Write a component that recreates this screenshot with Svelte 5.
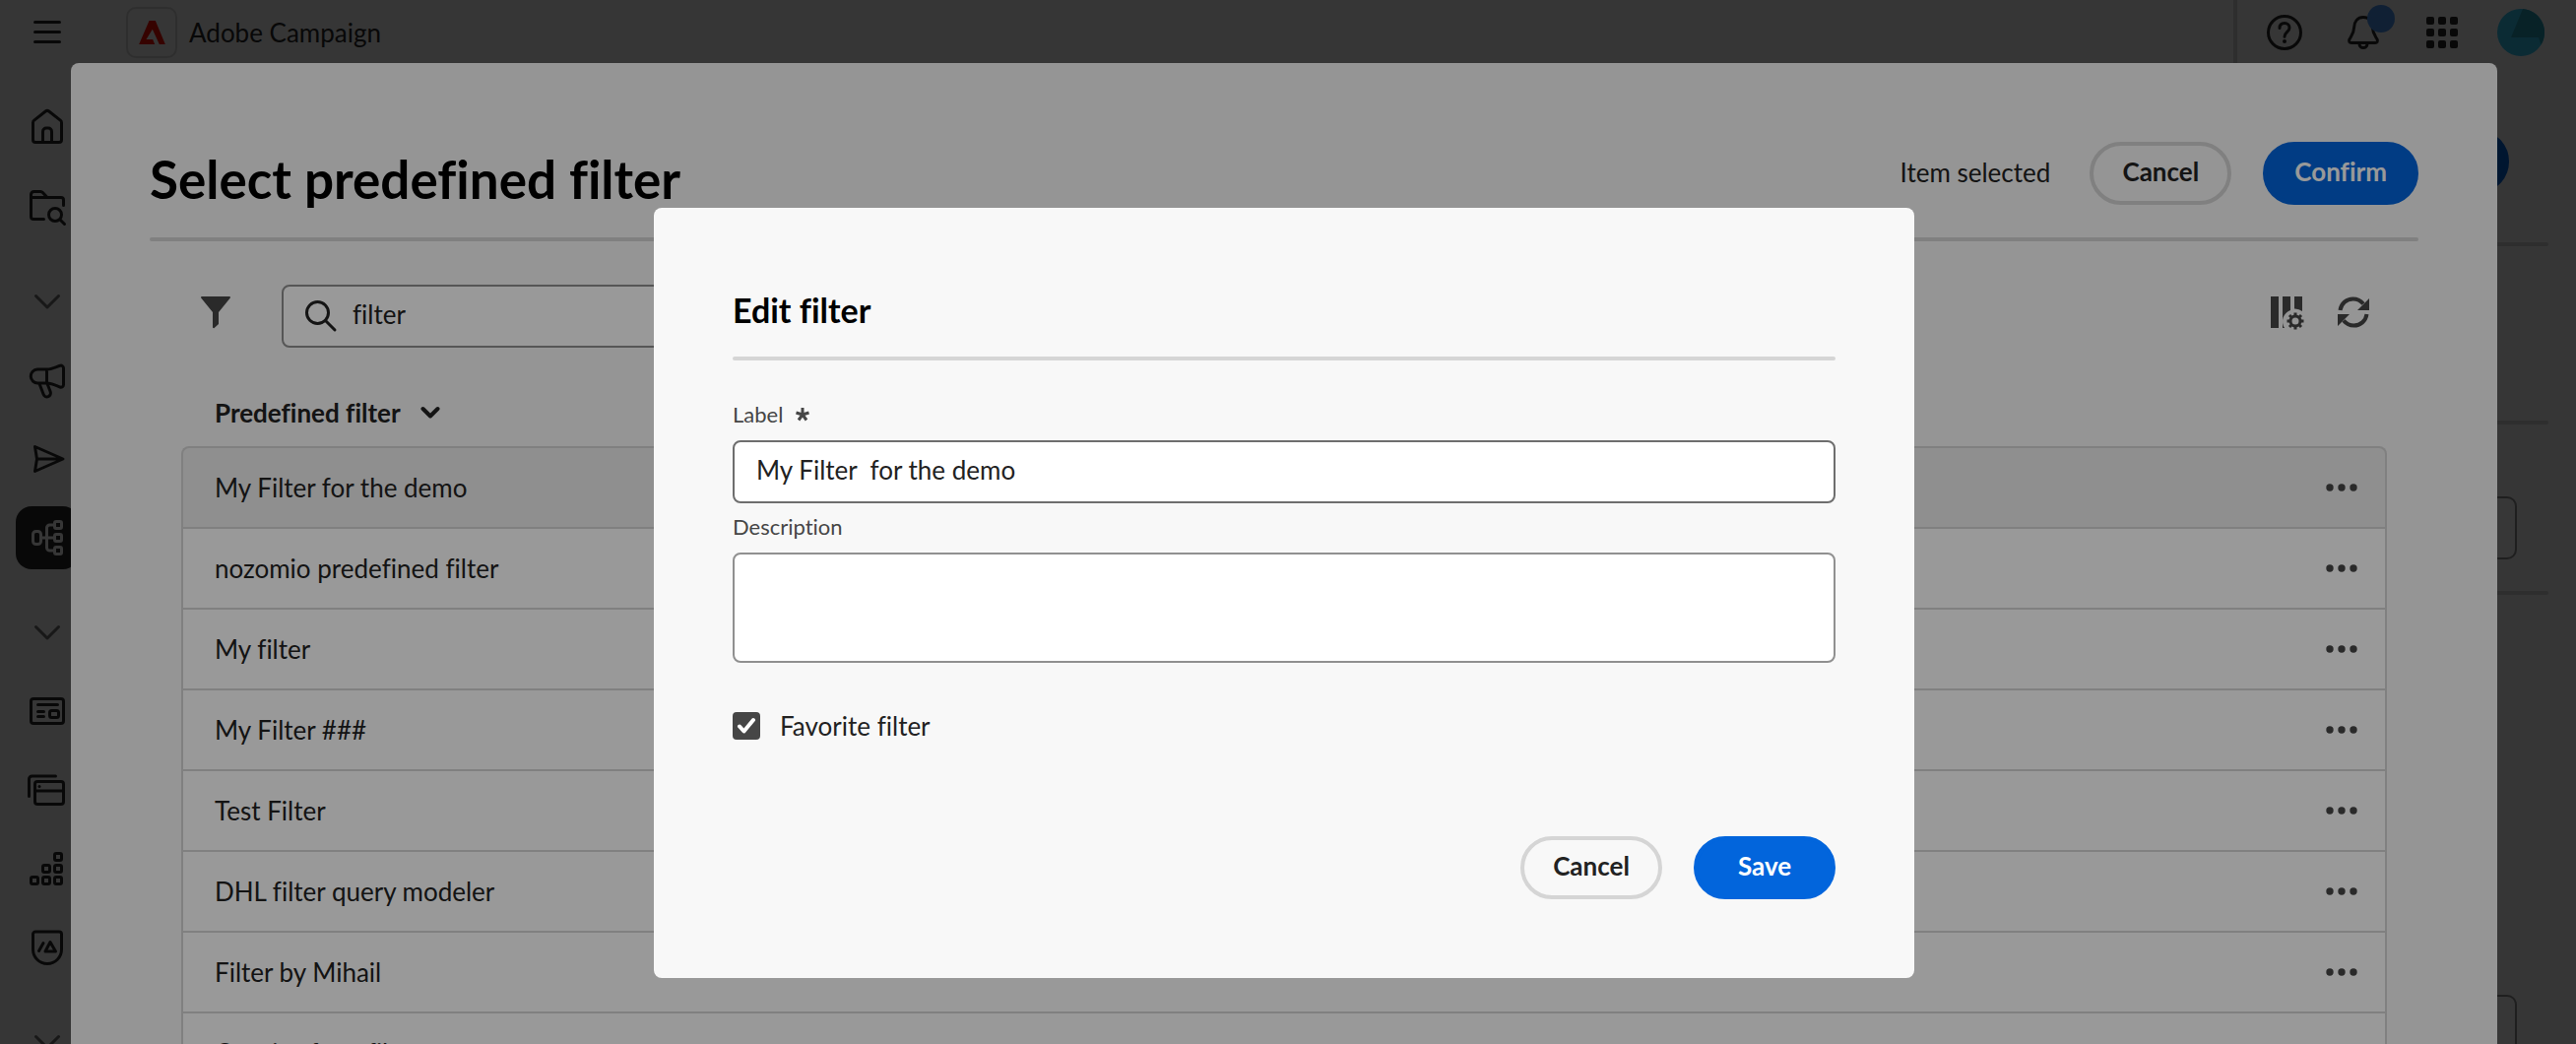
<script>
  let search = $state('filter');
  let label = $state('My Filter  for the demo');
  let description = $state('');
  let favorite = $state(true);

  const rows = [
    'My Filter for the demo',
    'nozomio predefined filter',
    'My filter',
    'My Filter ###',
    'Test Filter',
    'DHL filter query modeler',
    'Filter by Mihail',
    'Queries for a filter'
  ];

  const rail = [
    { name: 'Home', icon: 'home' },
    { name: 'Explorer', icon: 'folder' },
    { name: 'Collapse section', icon: 'chevron' },
    { name: 'Campaigns', icon: 'megaphone' },
    { name: 'Deliveries', icon: 'send' },
    { name: 'Workflows', icon: 'workflow', active: true },
    { name: 'Collapse section', icon: 'chevron' },
    { name: 'Landing pages', icon: 'page' },
    { name: 'Templates', icon: 'windows' },
    { name: 'Audiences', icon: 'blocks' },
    { name: 'Brands', icon: 'shield' },
    { name: 'Collapse section', icon: 'chevron' }
  ];
</script>

{#snippet railIcon(icon)}
  <svg class="icon" viewBox="0 0 40 40" aria-hidden="true">
    {#if icon === 'home'}
      <path d="M5.500 14.500a3 3 0 0 1 1.200-2.400L18.300 3a2.800 2.800 0 0 1 3.400 0l11.600 9.100a3 3 0 0 1 1.200 2.400V32a2.500 2.500 0 0 1-2.500 2.500H8A2.500 2.500 0 0 1 5.500 32z" />
      <path d="M15.500 34V23.500a3.500 3.500 0 0 1 3.500-3.500h2a3.500 3.500 0 0 1 3.500 3.500V34" />
    {:else if icon === 'folder'}
      <path d="M16.500 32.500H6A2.500 2.500 0 0 1 3.500 30V7.500A3 3 0 0 1 6.500 4.500h6.700a3 3 0 0 1 2.200 1l4.600 5h14A2.500 2.500 0 0 1 36.500 13v5.500M4 10.500h16" />
      <circle cx="28" cy="28" r="6.500" />
      <path d="M33 33l4.500 4.500" />
    {:else if icon === 'chevron'}
      <path class="faint" d="M8.500 14.500L20 26l11.500-11.500" />
    {:else if icon === 'megaphone'}
      <path d="M10 9h9.500c5 0 9.500-2.500 13.500-3.700a2.600 2.600 0 0 1 3.500 2.500v16.700a2.600 2.600 0 0 1-3.500 2.500C29 25.500 24.500 23 19.500 23H10.500A7 7 0 0 1 10 9zM19.500 9v14" />
      <path d="M12 23.500l4.200 11a3.700 3.700 0 0 0 7-2.700l-3.300-8.500" />
    {:else if icon === 'send'}
      <path d="M7.500 7.500L36 20 7.500 32.500 9.500 20zM9.500 20H34" />
    {:else if icon === 'workflow'}
      <rect x="5.500" y="13.500" width="8" height="13" rx="3" />
      <rect x="27.500" y="3.500" width="7" height="7" rx="1.500" />
      <rect x="27.500" y="16.500" width="7" height="7" rx="1.500" />
      <rect x="27.500" y="29.500" width="7" height="7" rx="1.500" />
      <path d="M13.500 20h14M27.500 7H22.500a3 3 0 0 0-3 3v20a3 3 0 0 0 3 3h5" />
    {:else if icon === 'page'}
      <rect x="3.500" y="7.500" width="33" height="25" rx="2.500" />
      <path d="M10.500 13.500h20M10.500 20.500h6M10.500 25.500h6" />
      <rect x="22.500" y="19.500" width="9" height="7" rx="2" />
    {:else if icon === 'windows'}
      <rect x="7.500" y="11.500" width="29" height="23" rx="2.500" />
      <path d="M8 21h28M1.500 26.500V9A3 3 0 0 1 4.500 6h24" />
      <circle class="solid" cx="12" cy="16.500" r="1.500" />
    {:else if icon === 'blocks'}
      <rect x="27.500" y="4.500" width="7" height="7" rx="1.500" />
      <rect x="15.500" y="16.500" width="7" height="7" rx="1.500" />
      <rect x="27.500" y="16.500" width="7" height="7" rx="1.500" />
      <rect x="3.500" y="28.500" width="7" height="7" rx="1.500" />
      <rect x="15.500" y="28.500" width="7" height="7" rx="1.500" />
      <rect x="27.500" y="28.500" width="7" height="7" rx="1.500" />
    {:else if icon === 'shield'}
      <path d="M5.500 6.500a2.500 2.500 0 0 1 2.500-2.500h24a2.500 2.500 0 0 1 2.500 2.500V22a14.500 14.500 0 0 1-29 0z" />
      <path d="M16 15.500L11.500 23.500M23 14.500l5.500 9.500h-10.500z" />
    {/if}
  </svg>
{/snippet}

<div class="app">
  <header class="topbar">
    <button class="plain menu" aria-label="Menu">
      <svg class="icon" viewBox="0 0 40 40" aria-hidden="true">
        <path d="M7.500 9.500h25M7.500 19.500h25M7.500 29.500h25" />
      </svg>
    </button>
    <a class="brand" href="#home">
      <span class="logo">
        <svg viewBox="0 0 80 72" aria-hidden="true">
          <path d="M31 0h19l30 72H62L41 26 22 57h20l6 15H0z" />
        </svg>
      </span>
      Adobe Campaign
    </a>
    <nav class="tools" aria-label="Account">
      <button class="plain tool" aria-label="Help">
        <svg class="icon" viewBox="0 0 40 40" aria-hidden="true">
          <circle cx="20" cy="20" r="16.500" />
          <path d="M15 15.500c0-3.200 2-5 5-5s5 2 5 4.700c0 4-5 4.300-5 9" />
          <circle class="solid" cx="20" cy="29" r="2" />
        </svg>
      </button>
      <button class="plain tool" aria-label="Notifications">
        <svg class="icon" viewBox="0 0 40 40" aria-hidden="true">
          <path d="M20 4.500c-6 0-9 4.500-9.300 10-.3 7-3.200 9.500-4.800 12.500-1 2 .1 3.500 2 3.500h24.200c1.900 0 3-1.500 2-3.500-1.600-3-4.500-5.500-4.800-12.500-.3-5.500-3.300-10-9.300-10z" />
          <path d="M16 31.500a4 4 0 0 0 8 0" />
        </svg>
        <span class="badge"></span>
      </button>
      <button class="plain tool" aria-label="Apps">
        <svg class="icon" viewBox="0 0 40 40" aria-hidden="true">
          {#each [4, 16, 28] as y}
            {#each [4, 16, 28] as x}
              <rect class="solid" {x} {y} width="8" height="8" rx="2" />
            {/each}
          {/each}
        </svg>
      </button>
      <button class="plain tool" aria-label="Profile">
        <svg class="avatar" viewBox="0 0 48 48" aria-hidden="true">
          <circle class="face" cx="24" cy="24" r="24" />
          <path class="shade" d="M26 0a24 24 0 0 1 18.500 36.500L42 29H14z" />
        </svg>
      </button>
    </nav>
  </header>

  <div class="body">
    <nav class="rail" aria-label="Main">
      {#each rail as item}
        <button class="plain rail-item" class:active={item.active} class:group={item.icon === 'chevron'} aria-label={item.name}>
          {@render railIcon(item.icon)}
        </button>
      {/each}
    </nav>
    <main class="canvas">
      <div class="canvas-head"><button class="primary pill" aria-label="Start"></button></div>
      <hr />
      <div class="canvas-gap"></div>
      <hr />
      <div class="canvas-field"><input aria-label="Target" /></div>
      <hr />
      <div class="canvas-list"><input aria-label="Options" /></div>
    </main>
  </div>
</div>

<div class="layer layer-select">
  <section class="picker" role="dialog" aria-labelledby="picker-title">
    <div class="picker-head">
      <h1 id="picker-title">Select predefined filter</h1>
      <span class="count">Item selected</span>
      <div class="actions">
        <button class="pill outline">Cancel</button>
        <button class="pill primary">Confirm</button>
      </div>
    </div>
    <hr />
    <div class="picker-body">
      <div class="toolbar">
        <button class="plain filter-toggle" aria-label="Show filters">
          <svg viewBox="0 0 36 36" aria-hidden="true">
            <path d="M4 2h28a1 1 0 0 1 .8 1.600L21 18v12l-4.400 4a1 1 0 0 1-1.600-.8V18L3.200 3.600A1 1 0 0 1 4 2z" />
          </svg>
        </button>
        <div class="search">
          <svg class="icon" viewBox="0 0 40 40" aria-hidden="true">
            <circle cx="16.500" cy="16.500" r="11" />
            <path d="M24.500 24.500l9.500 9.500" />
          </svg>
          <input type="search" aria-label="Search" bind:value={search} />
        </div>
        <div class="toolbar-end">
          <button class="plain" aria-label="Configure columns">
            <svg viewBox="0 0 36 36" aria-hidden="true">
              <path d="M2 2h8v32H2zM14 2h8v14a12 12 0 0 0-6 18h-2zM26 2h8v15a12 12 0 0 0-8-2.500z" />
              <circle class="gear" cx="27" cy="27" r="5" />
              <path class="teeth" d="M27 18.500v3M27 32.500v3M18.500 27h3M32.500 27h3M21 21l2.200 2.200M30.800 30.800L33 33M21 33l2.200-2.200M30.800 23.200L33 21" />
            </svg>
          </button>
          <button class="plain" aria-label="Refresh">
            <svg viewBox="0 0 36 36" aria-hidden="true">
              <path class="arc" d="M4.500 16C5.500 9 11 4.500 17.500 4.500c4.300 0 8 1.900 10.500 5M31.500 20C30.500 27 25 31.500 18.500 31.500c-4.300 0-8-1.900-10.500-5" />
              <path d="M34 4v12H22zM2 32V20h12z" />
            </svg>
          </button>
        </div>
      </div>

      <table>
        <thead>
          <tr>
            <th scope="col" colspan="2">
              <button class="plain sort">
                Predefined filter
                <svg viewBox="0 0 20 20" aria-hidden="true"><path d="M2.500 6L10 13.500 17.500 6" /></svg>
              </button>
            </th>
          </tr>
        </thead>
        <tbody>
          {#each rows as row, i}
            <tr class:selected={i === 0}>
              <td>{row}</td>
              <td class="more">
                <button class="plain" aria-label={`More actions for ${row}`}>
                  <svg viewBox="0 0 36 36" aria-hidden="true">
                    <circle cx="6" cy="18" r="3.700" />
                    <circle cx="18" cy="18" r="3.700" />
                    <circle cx="30" cy="18" r="3.700" />
                  </svg>
                </button>
              </td>
            </tr>
          {/each}
        </tbody>
      </table>
    </div>
  </section>
</div>

<div class="layer layer-edit">
  <form class="editor" role="dialog" aria-labelledby="editor-title" onsubmit={(e) => e.preventDefault()}>
    <h2 id="editor-title">Edit filter</h2>
    <hr />
    <div class="fields">
      <label class="field-label" for="filter-label">
        Label
        <svg class="required" viewBox="0 0 16 16" aria-hidden="true">
          <path d="M8 1v7M8 8L1.500 6M8 8l6.500-2M8 8l-4 5.500M8 8l4 5.500" />
        </svg>
      </label>
      <input id="filter-label" class="text" bind:value={label} required />
      <label class="field-label" for="filter-description">Description</label>
      <textarea id="filter-description" class="text" bind:value={description}></textarea>
      <label class="check">
        <span class="box">
          <input type="checkbox" bind:checked={favorite} />
          <svg viewBox="0 0 28 28" aria-hidden="true"><path d="M7 14.500l4.500 5L21 8" /></svg>
        </span>
        Favorite filter
      </label>
    </div>
    <div class="actions">
      <button type="button" class="pill outline">Cancel</button>
      <button type="submit" class="pill primary">Save</button>
    </div>
  </form>
</div>

<style>
  :global(body) {
    margin: 0;
    overflow: hidden;
    background: #f8f8f8;
    color: #222;
    font-family: Lato, 'Noto Sans', sans-serif;
    font-size: 26px;
    line-height: 36px;
    font-variant-ligatures: none;
  }

  :global(*) {
    box-sizing: border-box;
  }

  button,
  input,
  textarea {
    font: inherit;
    color: inherit;
    margin: 0;
  }

  h1,
  h2 {
    margin: 0;
    color: #000;
    font-weight: 700;
  }

  hr {
    height: 4px;
    margin: 0;
    border: 0;
    border-radius: 2px;
    background: #d5d5d5;
  }

  .plain {
    display: flex;
    align-items: center;
    justify-content: center;
    padding: 0;
    border: 0;
    background: none;
  }

  .icon {
    display: block;
    width: 40px;
    height: 40px;
    fill: none;
    stroke: #292929;
    stroke-width: 3;
    stroke-linecap: round;
    stroke-linejoin: round;
  }

  .icon .solid {
    fill: #292929;
    stroke: none;
  }

  .icon .faint {
    stroke: #6e6e6e;
  }

  .pill {
    min-width: 144px;
    height: 64px;
    padding: 0 28px 4px;
    border: 4px solid transparent;
    border-radius: 32px;
    font-weight: 700;
  }

  .primary {
    background: #0265dc;
    border-color: #0265dc;
    color: #fff;
  }

  .outline {
    background: none;
    border-color: #d5d5d5;
  }

  .actions {
    display: flex;
    justify-content: flex-end;
    gap: 32px;
  }

  /* Application shell */
  .app {
    display: flex;
    flex-direction: column;
    height: 100vh;
    padding-right: 8px;
    overflow: hidden;
  }

  .topbar {
    display: flex;
    align-items: center;
    flex: none;
    height: 66px;
    padding: 0 8px 0 16px;
  }

  .menu {
    width: 64px;
    height: 64px;
  }

  .brand {
    display: flex;
    align-items: center;
    gap: 12px;
    margin-left: 48px;
    color: #292929;
    text-decoration: none;
  }

  .logo {
    display: flex;
    align-items: center;
    justify-content: center;
    width: 52px;
    height: 52px;
    border: 2px solid #d5d5d5;
    border-radius: 10px;
  }

  .logo svg {
    width: 27px;
    height: 24px;
    fill: #fa0f00;
  }

  .tools {
    display: flex;
    align-items: center;
    height: 66px;
    margin-left: auto;
    padding-left: 8px;
    border-left: 4px solid #d5d5d5;
  }

  .tool {
    position: relative;
    width: 80px;
    height: 64px;
  }

  .badge {
    position: absolute;
    top: 4px;
    right: 8px;
    width: 28px;
    height: 28px;
    border-radius: 50%;
    background: #4b96f0;
  }

  .avatar {
    width: 48px;
    height: 48px;
  }

  .face {
    fill: #34c5f0;
  }

  .shade {
    fill: #289db4;
  }

  .body {
    display: flex;
    flex: 1;
    min-height: 0;
  }

  .rail {
    display: flex;
    flex-direction: column;
    flex: none;
    gap: 16px;
    width: 96px;
    padding: 32px 16px 0;
  }

  .rail-item {
    flex: none;
    height: 64px;
    border-radius: 16px;
  }

  .group {
    margin-top: 16px;
  }

  .active {
    background: #292929;
  }

  .active .icon {
    stroke: #f8f8f8;
  }

  .canvas {
    flex: 1;
    padding-right: 20px;
  }

  .canvas-head {
    display: flex;
    justify-content: flex-end;
    padding: 66px 40px 50px 0;
  }

  .canvas-gap {
    height: 177px;
  }

  .canvas-field,
  .canvas-list {
    display: flex;
    padding: 73px 32px 32px 0;
  }

  .canvas-list {
    padding-top: 406px;
  }

  .canvas input {
    width: 100%;
    height: 64px;
    border: 2px solid #909090;
    border-radius: 10px;
    background: #fff;
  }

  /* Modal layers */
  .layer {
    position: fixed;
    inset: 0;
    display: flex;
    justify-content: center;
    padding-right: 8px;
  }

  .layer-select {
    padding-top: 64px;
    background: rgba(0, 0, 0, 0.64);
  }

  .layer-edit {
    align-items: flex-start;
    padding-top: 211px;
    background: rgba(0, 0, 0, 0.4);
  }

  .picker {
    width: calc(100% - 144px);
    padding: 80px 80px 0;
    border-radius: 8px 8px 0 0;
    background: #f8f8f8;
    overflow: hidden;
  }

  .picker-head {
    display: flex;
    align-items: flex-start;
    padding-bottom: 25px;
  }

  h1 {
    flex: 1;
    padding-top: 4px;
    font-size: 53px;
    line-height: 68px;
  }

  .count {
    margin-right: 40px;
    padding-top: 13px;
  }

  .picker-body {
    padding: 44px 32px 0;
  }

  .toolbar {
    display: flex;
    height: 64px;
    margin-bottom: 32px;
  }

  .toolbar svg,
  .more svg {
    width: 36px;
    height: 36px;
    fill: #464646;
  }

  .toolbar .plain {
    height: 56px;
  }

  .filter-toggle {
    width: 70px;
  }

  .search {
    display: flex;
    align-items: center;
    gap: 12px;
    width: 480px;
    height: 64px;
    margin-left: 32px;
    padding-left: 18px;
    border: 2px solid #909090;
    border-radius: 8px;
    background: #fff;
  }

  .toolbar .search svg {
    width: 40px;
    height: 40px;
    fill: none;
    stroke: #222;
  }

  .search input {
    flex: 1;
    min-width: 0;
    padding: 0 0 4px;
    border: 0;
    background: none;
    appearance: none;
    outline: none;
  }

  .toolbar-end {
    display: flex;
    gap: 32px;
    margin-left: auto;
    padding-right: 16px;
  }

  .toolbar .gear,
  .toolbar .teeth,
  .toolbar .arc {
    fill: none;
    stroke: #464646;
    stroke-width: 3;
  }

  .toolbar .arc {
    stroke-width: 4;
  }

  table {
    width: 100%;
    border-collapse: separate;
    border-spacing: 0;
  }

  th {
    height: 68px;
    padding: 0 34px;
    text-align: left;
  }

  .sort {
    gap: 20px;
    font-weight: 700;
  }

  .sort svg {
    width: 20px;
    height: 20px;
    fill: none;
    stroke: #222;
    stroke-width: 4;
    stroke-linecap: round;
    stroke-linejoin: round;
  }

  td {
    height: 82px;
    padding: 0 32px;
    border-bottom: 2px solid #d5d5d5;
    background: #fff;
  }

  td:first-child {
    border-left: 2px solid #d5d5d5;
  }

  td:last-child {
    border-right: 2px solid #d5d5d5;
  }

  .selected td {
    height: 84px;
    border-top: 2px solid #d5d5d5;
    background: #eee;
  }

  .selected td:first-child {
    border-top-left-radius: 8px;
  }

  .selected td:last-child {
    border-top-right-radius: 8px;
  }

  .more {
    width: 96px;
    padding: 0 26px 0 0;
  }

  .more button {
    margin-left: auto;
  }

  /* Edit dialog */
  .editor {
    width: 1280px;
    max-width: calc(100% - 144px);
    padding: 80px;
    border-radius: 8px;
    background: #f8f8f8;
  }

  h2 {
    padding-bottom: 23px;
    font-size: 34px;
    line-height: 48px;
  }

  .fields {
    display: flex;
    flex-direction: column;
    padding: 31px 0 92px;
  }

  .field-label {
    display: flex;
    align-items: center;
    gap: 12px;
    height: 50px;
    padding-bottom: 2px;
    color: #464646;
    font-size: 22px;
  }

  .required {
    width: 16px;
    height: 16px;
    fill: none;
    stroke: #464646;
    stroke-width: 3;
  }

  .text {
    width: 100%;
    height: 64px;
    padding: 0 22px 4px;
    border: 2px solid #6e6e6e;
    border-radius: 8px;
    background: #fff;
    outline: none;
  }

  textarea.text {
    height: 112px;
    border-color: #909090;
    resize: none;
  }

  .check {
    display: flex;
    align-items: center;
    gap: 20px;
    margin-top: 44px;
    height: 40px;
  }

  .box {
    display: grid;
    width: 28px;
    height: 28px;
  }

  .box input,
  .box svg {
    grid-area: 1 / 1;
    width: 28px;
    height: 28px;
  }

  .box input {
    appearance: none;
    border: 4px solid #464646;
    border-radius: 4px;
  }

  .box input:checked {
    background: #464646;
  }

  .box svg {
    fill: none;
    stroke: #fff;
    stroke-width: 4;
    stroke-linecap: round;
    stroke-linejoin: round;
    pointer-events: none;
  }
</style>
